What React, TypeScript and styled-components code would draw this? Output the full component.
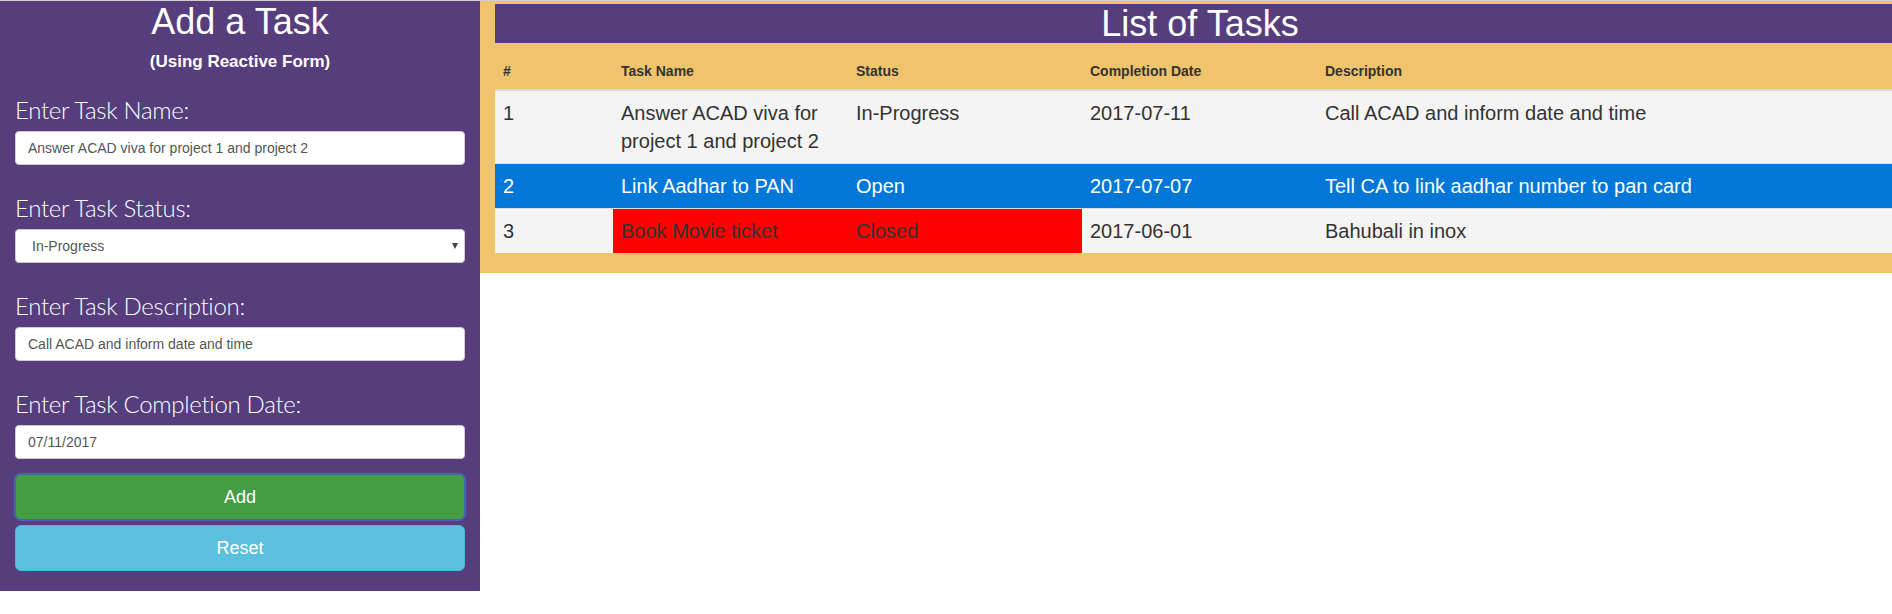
import React from "react";
import styled, { createGlobalStyle } from "styled-components";

const GlobalStyle = createGlobalStyle`
  html, body { margin: 0; padding: 0; overflow: hidden; background: #fff; }
  body { font-family: "Liberation Sans", Arial, sans-serif; font-size: 14px; color: #333; }
  * { box-sizing: border-box; }
`;

const Page = styled.div`
  width: 1920px;
  display: flex;
  align-items: flex-start;
  border-top: 1px solid #cfcfcf;
`;

const Sidebar = styled.section`
  width: 480px;
  flex: none;
  background: #563d7c;
  padding: 1px 15px 20px;
  color: #fff;
`;

const Title = styled.h1`
  margin: 0;
  font-size: 36px;
  line-height: 40px;
  font-weight: 400;
  text-align: center;
`;

const Subtitle = styled.h4`
  margin: 10px 0 0;
  font-size: 17px;
  line-height: 20px;
  font-weight: 700;
  text-align: center;
`;

const Form = styled.form`
  display: flex;
  flex-direction: column;
  gap: 28px;
  padding-top: 23px;
`;

const FormGroup = styled.div`
  display: flex;
  flex-direction: column;
`;

const Label = styled.label`
  font-family: Lato, "Open Sans", sans-serif;
  font-weight: 300;
  font-size: 24px;
  letter-spacing: -0.3px;
  line-height: 29px;
  margin-bottom: 7px;
  color: #fff;
`;

const Input = styled.input`
  height: 34px;
  width: 100%;
  padding: 6px 12px;
  font-family: "Liberation Sans", Arial, sans-serif;
  font-size: 14px;
  color: #555;
  background: #fff;
  border: 1px solid #ccc;
  border-radius: 4px;
  outline: none;
`;

const SelectWrap = styled.div`
  position: relative;
`;

const Select = styled.select`
  appearance: none;
  -webkit-appearance: none;
  height: 34px;
  width: 100%;
  padding: 6px 16px;
  font-family: "Liberation Sans", Arial, sans-serif;
  font-size: 14px;
  color: #555;
  background: #fff;
  border: 1px solid #ccc;
  border-radius: 4px;
  outline: none;
`;

const Arrow = styled.span`
  position: absolute;
  right: 7px;
  top: 14px;
  width: 0;
  height: 0;
  border-left: 3.5px solid transparent;
  border-right: 3.5px solid transparent;
  border-top: 6px solid #444;
  pointer-events: none;
`;

const ButtonStack = styled.div`
  display: flex;
  flex-direction: column;
  gap: 5px;
  margin-top: 15px;
`;

const Button = styled.button<{ $variant: "success" | "info"; $focused?: boolean }>`
  height: 46px;
  width: 100%;
  border-radius: 6px;
  border: 1px solid ${(p) => (p.$variant === "success" ? "#398439" : "#46b8da")};
  background: ${(p) => (p.$variant === "success" ? "#449d44" : "#5bc0de")};
  color: #fff;
  font-family: "Liberation Sans", Arial, sans-serif;
  font-size: 18px;
  line-height: 24px;
  padding: 10px 16px;
  cursor: pointer;
  box-shadow: ${(p) => (p.$focused ? "0 0 0 1px #4c5fc6" : "none")};
  ${(p) => (p.$focused ? "border-color: #3b6a9c;" : "")}
`;

const Main = styled.section`
  width: 1440px;
  flex: none;
  background: #f0c36d;
  padding: 3px 15px 20px;
`;

const ListHeader = styled.h2`
  margin: 0;
  background: #563d7c;
  color: #fff;
  font-size: 36px;
  line-height: 39px;
  font-weight: 400;
  text-align: center;
`;

const Table = styled.table`
  width: 100%;
  border-collapse: collapse;
  table-layout: fixed;
`;

const Th = styled.th<{ $w?: number }>`
  width: ${(p) => (p.$w ? `${p.$w}px` : "auto")};
  text-align: left;
  font-size: 14px;
  font-weight: 700;
  line-height: 20px;
  padding: 18px 8px 8px;
  border-bottom: 2px solid #ddd;
  color: #333;
  vertical-align: bottom;
`;

const Row = styled.tr<{ $tone?: "default" | "primary" }>`
  background: ${(p) => (p.$tone === "primary" ? "#0277d8" : "#f4f4f4")};
  color: ${(p) => (p.$tone === "primary" ? "#fff" : "#333")};
`;

const Td = styled.td<{ $danger?: boolean }>`
  font-size: 20px;
  line-height: 28px;
  padding: 8px;
  vertical-align: top;
  border-top: 1px solid #ddd;
  background: ${(p) => (p.$danger ? "#ff0000" : "transparent")};
  color: ${(p) => (p.$danger ? "#333" : "inherit")};
`;

type Task = {
  id: number;
  name: string;
  status: string;
  date: string;
  description: string;
  tone?: "default" | "primary";
  danger?: boolean;
};

const tasks: Task[] = [
  {
    id: 1,
    name: "Answer ACAD viva for project 1 and project 2",
    status: "In-Progress",
    date: "2017-07-11",
    description: "Call ACAD and inform date and time",
  },
  {
    id: 2,
    name: "Link Aadhar to PAN",
    status: "Open",
    date: "2017-07-07",
    description: "Tell CA to link aadhar number to pan card",
    tone: "primary",
  },
  {
    id: 3,
    name: "Book Movie ticket",
    status: "Closed",
    date: "2017-06-01",
    description: "Bahubali in inox",
    danger: true,
  },
];

export default function App() {
  return (
    <>
      <GlobalStyle />
      <Page>
        <Sidebar>
          <Title>Add a Task</Title>
          <Subtitle>(Using Reactive Form)</Subtitle>
          <Form onSubmit={(e) => e.preventDefault()}>
            <FormGroup>
              <Label>Enter Task Name:</Label>
              <Input type="text" defaultValue="Answer ACAD viva for project 1 and project 2" />
            </FormGroup>
            <FormGroup>
              <Label>Enter Task Status:</Label>
              <SelectWrap>
                <Select defaultValue="In-Progress">
                  <option>Open</option>
                  <option>In-Progress</option>
                  <option>Closed</option>
                </Select>
                <Arrow />
              </SelectWrap>
            </FormGroup>
            <FormGroup>
              <Label>Enter Task Description:</Label>
              <Input type="text" defaultValue="Call ACAD and inform date and time" />
            </FormGroup>
            <FormGroup>
              <Label>Enter Task Completion Date:</Label>
              <Input type="text" defaultValue="07/11/2017" />
            </FormGroup>
          </Form>
          <ButtonStack>
            <Button type="button" $variant="success" $focused>
              Add
            </Button>
            <Button type="button" $variant="info">
              Reset
            </Button>
          </ButtonStack>
        </Sidebar>
        <Main>
          <ListHeader>List of Tasks</ListHeader>
          <Table>
            <thead>
              <tr>
                <Th $w={118}>#</Th>
                <Th $w={235}>Task Name</Th>
                <Th $w={234}>Status</Th>
                <Th $w={235}>Completion Date</Th>
                <Th>Description</Th>
              </tr>
            </thead>
            <tbody>
              {tasks.map((t) => (
                <Row key={t.id} $tone={t.tone}>
                  <Td>{t.id}</Td>
                  <Td $danger={t.danger}>{t.name}</Td>
                  <Td $danger={t.danger}>{t.status}</Td>
                  <Td>{t.date}</Td>
                  <Td>{t.description}</Td>
                </Row>
              ))}
            </tbody>
          </Table>
        </Main>
      </Page>
    </>
  );
}
